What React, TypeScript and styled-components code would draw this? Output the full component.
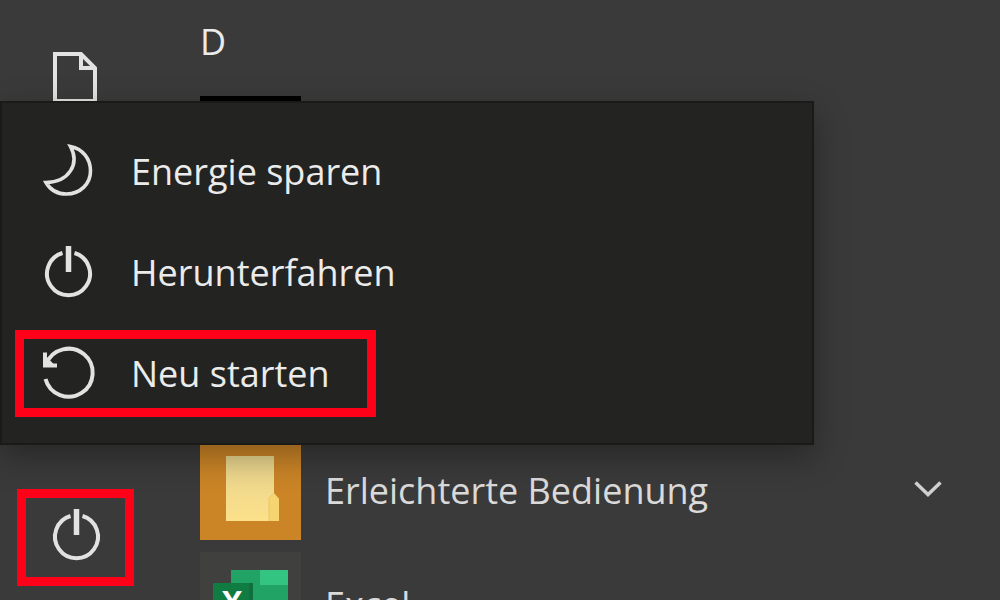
import React from "react";
import styled, { createGlobalStyle } from "styled-components";

const GlobalStyle = createGlobalStyle`
  * { box-sizing: border-box; }
  body {
    margin: 0;
    background: #3a3a3a;
    color: #ebebeb;
    font-family: "Open Sans", "Noto Sans", sans-serif;
    font-size: 36px;
    line-height: 48px;
  }
  button {
    font: inherit;
    color: inherit;
    background: none;
    cursor: pointer;
  }
  svg { display: block; flex: none; }
`;

const StartMenu = styled.main`
  position: relative;
  display: grid;
  grid-template-columns: 200px 1fr;
  height: 100vh;
  overflow: hidden;
`;

const Rail = styled.nav`
  display: flex;
  flex-direction: column;
  justify-content: space-between;
  align-items: flex-start;
  height: 100vh;
  padding: 51px 0 14px 17px;
`;

const RailButton = styled.button<{ $marked?: boolean }>`
  display: flex;
  justify-content: center;
  width: 117px;
  padding: ${(p) => (p.$marked ? "10px 0 13px" : "0")};
  border: ${(p) => (p.$marked ? "9px solid #ff0019" : "0")};
`;

const AppPane = styled.section`
  padding-top: 18px;
`;

const Letter = styled.h2`
  margin: 0 0 30px;
  font-size: inherit;
  font-weight: 400;
`;

const AppList = styled.ul`
  display: grid;
  grid-auto-rows: 102px;
  row-gap: 12px;
  margin: 0;
  padding: 0;
  list-style: none;
`;

const AppItem = styled.li<{ $row: number }>`
  grid-row: ${(p) => p.$row};
`;

const AppButton = styled.button`
  display: flex;
  align-items: center;
  gap: 24px;
  width: 100%;
  height: 102px;
  padding: 0 58px 0 0;
  border: 0;
  color: #dadada;
  text-align: left;
`;

const Tile = styled.span<{ $color: string }>`
  flex: none;
  width: 101px;
  height: 102px;
  background: ${(p) => p.$color};
`;

const AppName = styled.span`
  flex: 1;
  padding-top: 4px;
`;

const PowerMenu = styled.div`
  position: absolute;
  top: 101px;
  left: 0;
  display: flex;
  flex-direction: column;
  align-items: flex-start;
  gap: 14px;
  width: calc(100% - 186px);
  padding: 25px 15px 26px 13px;
  border: 2px solid #1a1a19;
  background: #232322;
  box-shadow: 0 12px 32px rgba(0, 0, 0, 0.32);
`;

const MenuItem = styled.button<{ $marked?: boolean }>`
  display: flex;
  align-items: center;
  gap: 37px;
  min-width: 361px;
  height: 87px;
  padding: 0 0 0 18px;
  border: 9px solid ${(p) => (p.$marked ? "#ff0019" : "transparent")};
  text-align: left;
`;

const Glyph = ({ children }: { children: React.ReactNode }) => (
  <svg width="52" height="56" viewBox="0 0 52 56" overflow="visible" fill="none" stroke="#e2e2e2" strokeWidth="4" aria-hidden="true">
    {children}
  </svg>
);

const MoonIcon = () => (
  <Glyph>
    <path d="M28.500 2.500C41 5 48.500 15 48.500 27C48.500 40 38 50 24.500 50C15 50 8 45.500 4 38.500C27 38 38 20 28.500 2.500Z" strokeWidth="3.600" />
  </Glyph>
);

const PowerIcon = () => (
  <Glyph>
    <path d="M20.500 8A21.500 21.500 0 1 0 32.500 8" />
    <path d="M26.500 1V27" strokeWidth="5.500" />
  </Glyph>
);

const RestartIcon = () => (
  <Glyph>
    <path d="M3.500 33A24 24 0 1 0 4.500 17.500" />
    <path d="M3 6.500V19.500H15" />
    <path d="M3 9L13 19.500H3Z" fill="#e2e2e2" stroke="none" />
  </Glyph>
);

const DocumentIcon = () => (
  <svg width="46" height="56" viewBox="0 0 46 56" fill="none" stroke="#e2e2e2" strokeWidth="4" aria-hidden="true">
    <path d="M2 3H28L42 17V50H2Z" />
    <path d="M28 3V17H42" />
  </svg>
);

const ChevronIcon = () => (
  <svg width="28" height="16" viewBox="0 0 28 16" fill="none" stroke="#cfcfcf" strokeWidth="3.500" aria-hidden="true">
    <path d="M1.500 1.500L14 13.500L26.500 1.500" />
  </svg>
);

const FolderArt = () => (
  <svg width="101" height="102" viewBox="0 0 101 102" aria-hidden="true">
    <defs>
      <linearGradient id="paper" x1="0" y1="0" x2="0" y2="1">
        <stop offset="0" stopColor="#e8d58f" />
        <stop offset="1" stopColor="#fce08a" />
      </linearGradient>
    </defs>
    <path d="M26 18H74V56L79 61V83H26Z" fill="url(#paper)" />
    <path d="M69 83V60L74 55L79 61V83Z" fill="#f6d571" />
    <path d="M69 83V60L74 55" fill="none" stroke="#e9c767" strokeWidth="1" />
  </svg>
);

const ExcelArt = () => (
  <svg width="101" height="102" viewBox="0 0 101 102" aria-hidden="true">
    <path d="M31 18H88V84H31Z" fill="#21a366" />
    <path d="M60 18H88V33H60Z" fill="#33c481" />
    <path d="M31 31H53V76H31Z" fill="#0c5e33" opacity="0.75" />
    <path d="M13 31H49V68H13Z" fill="#107c41" />
    <text x="32" y="61" textAnchor="middle" fill="#fff" fontFamily="Open Sans, sans-serif" fontWeight="700" fontSize="31">X</text>
  </svg>
);

export default function App() {
  return (
    <>
      <GlobalStyle />
      <StartMenu>
        <Rail aria-label="Start">
          <RailButton aria-label="Dokumente"><DocumentIcon /></RailButton>
          <RailButton $marked aria-label="Ein/Aus"><PowerIcon /></RailButton>
        </Rail>
        <AppPane>
          <Letter>D</Letter>
          <AppList>
            <AppItem $row={1}>
              <Tile as="div" $color="#000" />
            </AppItem>
            <AppItem $row={4}>
              <AppButton>
                <Tile $color="#cb8527"><FolderArt /></Tile>
                <AppName>Erleichterte Bedienung</AppName>
                <ChevronIcon />
              </AppButton>
            </AppItem>
            <AppItem $row={5}>
              <AppButton>
                <Tile $color="#40403f"><ExcelArt /></Tile>
                <AppName>Excel</AppName>
              </AppButton>
            </AppItem>
          </AppList>
        </AppPane>
        <PowerMenu>
          <MenuItem><MoonIcon />Energie sparen</MenuItem>
          <MenuItem><PowerIcon />Herunterfahren</MenuItem>
          <MenuItem $marked><RestartIcon />Neu starten</MenuItem>
        </PowerMenu>
      </StartMenu>
    </>
  );
}
